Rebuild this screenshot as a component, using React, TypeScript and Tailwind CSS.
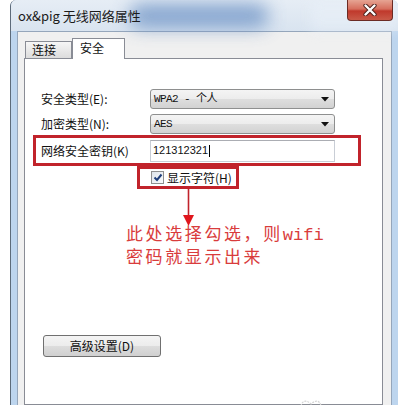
import React from "react";

const ui = "font-['Noto_Sans_CJK_SC','Noto_Sans',sans-serif]";

function ComboArrow() {
  return (
    <svg width="8" height="5" viewBox="0 0 8 5" className="shrink-0">
      <path d="M0 0 L8 0 L4 4.5 Z" fill="#111" />
    </svg>
  );
}

function Combo({ children }: { children: React.ReactNode }) {
  return (
    <div className="flex h-[20px] w-[185px] items-center justify-between rounded-[3px] border border-[#8e8f8f] bg-[linear-gradient(to_bottom,#f4f4f4_0%,#ececec_50%,#dedede_50%,#d2d2d2_100%)] pl-[3px] pr-[5px]">
      <span className="font-['Liberation_Mono','Noto_Sans_CJK_SC',monospace] text-[11px] leading-none tracking-[-0.6px] text-[#111]">
        {children}
      </span>
      <ComboArrow />
    </div>
  );
}

export default function App() {
  return (
    <div className={`relative h-[414px] w-[409px] overflow-hidden bg-white ${ui}`}>
      <div className="ml-[10px] flex h-[405px] w-[388px] flex-col overflow-hidden rounded-t-[6px] border-l border-l-[#5d6b7a] bg-[#bdd5ee]">
        {/* title bar */}
        <div className="relative flex h-[31px] shrink-0 bg-[linear-gradient(to_bottom,#e6edf5,#d9e4f0)]">
          <div className="absolute left-[118px] top-[4px] h-[24px] w-[140px] rounded-full bg-[#6f94c6] opacity-80 blur-[9px]" />
          <div className="absolute left-[300px] top-[0px] h-[31px] w-[88px] bg-[#e9f0f8] opacity-60 blur-[6px]" />
          <span className="relative z-10 pl-[7px] text-[13px] leading-[31px] text-[#1b1b1b]">ox&amp;pig 无线网络属性</span>
          <div className="relative z-10 ml-auto mr-[5px] flex h-[21px] w-[46px] items-center justify-center rounded-b-[4px] border border-t-0 border-[#6b2b24] bg-[linear-gradient(to_bottom,#e6a493_0%,#d66e5d_45%,#c0392c_55%,#c95a48_100%)]">
            <svg width="14" height="12" viewBox="0 0 14 12">
              <path d="M2.5 1.5 L11.5 10.5 M11.5 1.5 L2.5 10.5" stroke="#4a1f1a" strokeWidth="4.2" strokeLinecap="round" />
              <path d="M2.5 1.5 L11.5 10.5 M11.5 1.5 L2.5 10.5" stroke="#ffffff" strokeWidth="2.4" strokeLinecap="round" />
            </svg>
          </div>
        </div>

        {/* client area */}
        <div className="ml-[6px] mr-[6px] flex flex-1 flex-col border border-b-0 border-[#95a6bb] bg-[#f0f0f0] pl-[6px] pr-[8px] pt-[6px]">
          {/* tabs */}
          <div className="relative z-10 flex h-[20px] items-end">
            <div className="ml-[1px] h-[17px] w-[47px] border border-b-0 border-[#898c95] bg-[linear-gradient(to_bottom,#f6f6f6,#dcdcdc)] pl-[6px] text-[12px] leading-[16px] text-[#111]">
              连接
            </div>
            <div className="-mb-[1px] h-[21px] w-[53px] border border-b-0 border-[#898c95] bg-white pl-[7px] text-[12px] leading-[18px] text-[#111]">
              安全
            </div>
          </div>

          {/* tab page */}
          <div className="relative flex flex-1 flex-col border border-[#898c95] bg-white text-[12px] text-[#111]">
            <div className="mt-[30px] flex h-[20px] items-center">
              <span className="ml-[16px] w-[109px]">安全类型(E):</span>
              <Combo>WPA2 - 个人</Combo>
            </div>
            <div className="mt-[5px] flex h-[20px] items-center">
              <span className="ml-[16px] w-[109px]">加密类型(N):</span>
              <Combo>AES</Combo>
            </div>

            <div className="ml-[8px] mt-[1px] flex h-[31px] w-[328px] items-center border-[3px] border-[#c1232b] pl-[5px]">
              <span className="w-[109px]">网络安全密钥(K)</span>
              <div className="flex h-[22px] w-[185px] items-center border border-[#c9ced6] border-t-[#abadb3] bg-white pl-[2px]">
                <span className="font-['Liberation_Sans',sans-serif] text-[11px] leading-none">121312321</span>
                <span className="ml-[1px] h-[12px] w-[1px] bg-black" />
              </div>
            </div>

            <div className="ml-[112px] flex h-[23px] w-[102px] items-center border-[3px] border-[#c1232b] pl-[11px]">
              <div className="flex h-[13px] w-[13px] items-center justify-center border border-[#8f8f8f] bg-[linear-gradient(135deg,#dde3ea,#fbfcfd)]">
                <svg width="10" height="9" viewBox="0 0 10 9">
                  <path d="M1.5 4.5 L4 7 L8.5 1.5" fill="none" stroke="#1f3e7a" strokeWidth="2" />
                </svg>
              </div>
              <span className="ml-[3px] leading-none">显示字符(H)</span>
            </div>

            <svg width="11" height="37" viewBox="0 0 11 37" className="ml-[158px]">
              <path d="M5.5 0 L5.5 28" stroke="#c1232b" strokeWidth="1.6" />
              <path d="M0 26 L11 26 L5.5 37 Z" fill="#e0161d" />
            </svg>

            <div className="ml-[101px] mt-[-3px] text-[17px] leading-[20px] tracking-[2.6px] text-[#d93c3c]">
              <div>
                此处选择勾选，则<span className="font-['Liberation_Mono',monospace] tracking-[0px]">wifi</span>
              </div>
              <div>密码就显示出来</div>
            </div>

            <div className="ml-[18px] mt-[69px] flex h-[22px] w-[118px] items-center justify-center rounded-[3px] border border-[#707070] bg-[linear-gradient(to_bottom,#f4f4f4_0%,#ececec_50%,#dddddd_50%,#d0d0d0_100%)] text-[12px] leading-none">
              高级设置(D)
            </div>

            <svg width="22" height="8" viewBox="0 0 22 8" className="absolute left-[275px] top-[340px]">
              <path d="M1 7 C2 1 7 1 11 5 C15 1 20 1 21 7" fill="none" stroke="#d6d6d6" strokeWidth="1.2" strokeDasharray="2 1" />
            </svg>
          </div>
        </div>
      </div>
    </div>
  );
}
